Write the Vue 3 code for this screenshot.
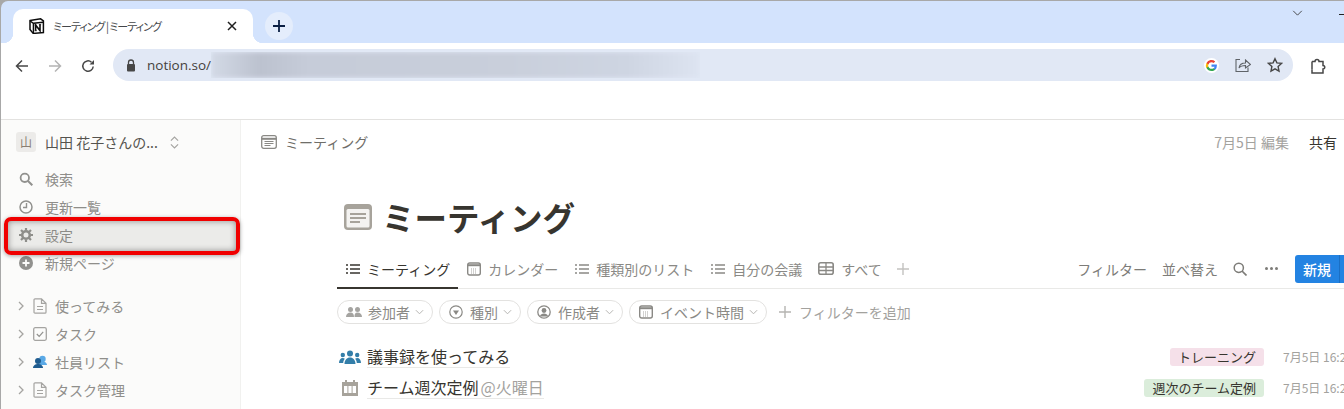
<template>
  <div class="page">
    <header class="tabstrip">
      <div class="tab">
        <svg class="favicon" viewBox="0 0 16 16" width="16" height="16"><path d="M1 2.600 11.600.8l2.800 2v11.800L4.200 15.400 1 11.500z" fill="#fff" stroke="#0c0c0c" stroke-width="1.500"/><path d="M1.200 3l3.200 2.400v9.600M4.400 5.200l9.800-1" fill="none" stroke="#0c0c0c" stroke-width="1.400"/><path d="M6.600 12.600V7.100l4.400 5.500V6.700" fill="none" stroke="#0c0c0c" stroke-width="1.600"/><path d="M5.700 7h1.800M9.900 6.700h2.200M5.700 12.700h2" stroke="#0c0c0c" stroke-width="1"/></svg>
        <span class="tabtitle">ミーティング | ミーティング</span>
        <svg class="tabclose" viewBox="0 0 10 10" width="10" height="10"><path d="M1 1l8 8M9 1l-8 8" stroke="#1f1f1f" stroke-width="1.500"/></svg>
      </div>
      <div class="newtab"><svg viewBox="0 0 12 12" width="12" height="12"><path d="M6 0v12M0 6h12" stroke="#0a1f44" stroke-width="1.800"/></svg></div>
      <svg class="winchev" viewBox="0 0 12 7" width="11" height="6"><path d="M1 1l5 5 5-5" fill="none" stroke="#333" stroke-width="1"/></svg>
      <span class="winmin"></span>
    </header>

    <div class="toolbar">
      <svg class="navicon first" viewBox="0 0 14 14" width="14" height="14"><path d="M13 7H2M7 1.500 1.500 7 7 12.500" fill="none" stroke="#474747" stroke-width="1.500"/></svg>
      <svg class="navicon" viewBox="0 0 14 14" width="14" height="14"><path d="M1 7h11M7 1.500 12.500 7 7 12.500" fill="none" stroke="#b4b4b4" stroke-width="1.500"/></svg>
      <svg class="navicon" viewBox="0 0 14 14" width="14" height="14"><path d="M12.200 7.500A5.200 5.200 0 1 1 10.500 3.200" fill="none" stroke="#474747" stroke-width="1.500"/><path d="M13 1v4.500H8.500z" fill="#474747"/></svg>
      <div class="omnibox">
        <svg class="lock" viewBox="0 0 10 13" width="10" height="13"><path d="M2.500 5V3.500a2.500 2.500 0 0 1 5 0V5" fill="none" stroke="#474747" stroke-width="1.300"/><rect x="1" y="5" width="8" height="7.500" rx="1" fill="#474747"/></svg>
        <span class="url">notion.so/</span>
        <div class="blurwrap"><div class="blur"></div></div>
        <span class="gbadge"><svg viewBox="0 0 14 14" width="13" height="13"><path d="M12.800 7.100c0-.5 0-.9-.1-1.300H7v2.500h3.300a2.800 2.800 0 0 1-1.200 1.800v1.500h2a6 6 0 0 0 1.700-4.500z" fill="#4285f4"/><path d="M7 13c1.600 0 3-.5 4-1.500L9 10a3.600 3.600 0 0 1-5.400-1.900H1.600v1.600A6 6 0 0 0 7 13z" fill="#34a853"/><path d="M3.600 8.100a3.600 3.600 0 0 1 0-2.300V4.300h-2a6 6 0 0 0 0 5.400z" fill="#fbbc05"/><path d="M7 3.400c.9 0 1.700.3 2.300.9L11 2.600A6 6 0 0 0 1.600 4.300l2 1.500A3.600 3.600 0 0 1 7 3.400z" fill="#ea4335"/></svg></span>
        <svg class="omniicon" viewBox="0 0 16 16" width="16" height="16"><path d="M5 2.500H1v12h12v-4" fill="none" stroke="#5f6368" stroke-width="1.100"/><path d="M4 11c.5-3.500 3-5 6.500-5V3l5 4.500-5 3.500V8.500C8 8.500 5.500 9 4 11z" fill="none" stroke="#5f6368" stroke-width="1.100"/></svg>
        <svg class="omniicon star" viewBox="0 0 16 16" width="16" height="16"><path d="M8 1.700l1.900 4.200 4.600.5-3.400 3.100.9 4.600L8 11.800l-4 2.300.9-4.600L1.500 6.400l4.600-.5z" fill="none" stroke="#474747" stroke-width="1.400"/></svg>
      </div>
      <svg class="puzzle" viewBox="0 0 16 16" width="16" height="16"><path d="M1 3.500h3a2 2 0 0 1 4 0h4v4a1.500 1.500 0 0 1 0 3.500v4H1v-3.500" fill="none" stroke="#474747" stroke-width="1.500"/><path d="M1 3.500v8" stroke="#474747" stroke-width="1.500"/></svg>
    </div>

    <div class="app">
      <aside class="sidebar">
        <div class="workspace">
          <span class="avatar">山</span>
          <span class="wsname">山田 花子さんの...</span>
          <svg viewBox="0 0 10 14" width="9" height="13"><path d="M1 5l4-4 4 4M1 9l4 4 4-4" fill="none" stroke="#a5a4a1" stroke-width="1.300"/></svg>
        </div>
        <nav class="nav">
          <div class="navitem">
            <svg viewBox="0 0 14 14" width="14" height="14"><circle cx="5.800" cy="5.800" r="4.200" fill="none" stroke="#91918e" stroke-width="1.800"/><path d="M9 9l4.300 4.300" stroke="#91918e" stroke-width="2"/></svg>
            <span>検索</span>
          </div>
          <div class="navitem">
            <svg viewBox="0 0 14 14" width="14" height="14"><circle cx="7" cy="7" r="6" fill="none" stroke="#91918e" stroke-width="1.500"/><path d="M7.500 3v4.500H4" fill="none" stroke="#91918e" stroke-width="1.400"/></svg>
            <span>更新一覧</span>
          </div>
          <div class="navitem">
            <svg viewBox="0 0 14 14" width="14" height="14"><circle cx="7" cy="7" r="3.800" fill="none" stroke="#91918e" stroke-width="2.600"/><path d="M7 0v2.500M7 11.500V14M0 7h2.500M11.500 7H14M2 2l2 2M10 10l2 2M12 2l-2 2M4 10l-2 2" stroke="#91918e" stroke-width="2.200"/></svg>
            <span>設定</span>
          </div>
          <div class="navitem">
            <svg viewBox="0 0 14 14" width="14" height="14"><circle cx="7" cy="7" r="7" fill="#91918e"/><path d="M7 3.500v7M3.500 7h7" stroke="#fbfbfa" stroke-width="1.800"/></svg>
            <span>新規ページ</span>
          </div>
        </nav>
        <div class="tree">
          <div class="treeitem" v-for="t in tree" :key="t.label">
            <svg class="chev" viewBox="0 0 6 10" width="6" height="10"><path d="M1 1l4 4-4 4" fill="none" stroke="#a5a4a1" stroke-width="1.300"/></svg>
            <svg v-if="t.icon === 'doc'" viewBox="0 0 14 16" width="14" height="16"><path d="M1 1.800a1 1 0 0 1 1-1h6.500L13 5.300v8.900a1 1 0 0 1-1 1H2a1 1 0 0 1-1-1zM8.500.8v4.500H13M4 8.500h6M4 11.500h6" fill="none" stroke="#a5a4a1" stroke-width="1.200"/></svg>
            <svg v-else-if="t.icon === 'check'" viewBox="0 0 14 14" width="14" height="14"><rect x=".7" y=".7" width="12.600" height="12.600" rx="1.500" fill="none" stroke="#a5a4a1" stroke-width="1.300"/><path d="M3.800 7l2.400 2.400 4-4.600" fill="none" stroke="#91918e" stroke-width="1.200"/></svg>
            <svg v-else viewBox="0 0 14 14" width="14" height="14"><circle cx="9.500" cy="4" r="3.200" fill="#5aa9e6"/><path d="M6 10c0-2.500 2-3.500 3.500-3.500S14 7.500 14 10z" fill="#5aa9e6"/><circle cx="5" cy="6" r="3" fill="#1f5c8f"/><path d="M0 13c0-2.500 2.500-4 5-4s5 1.500 5 4z" fill="#1f5c8f"/></svg>
            <span>{{ t.label }}</span>
          </div>
        </div>
      </aside>

      <main class="main">
        <div class="topbar">
          <svg viewBox="0 0 16 14" width="16" height="14"><rect x=".7" y=".7" width="14.600" height="12.600" rx="2" fill="none" stroke="#8a8985" stroke-width="1.300"/><path d="M.7 3.800h14.600" stroke="#8a8985" stroke-width="2"/><path d="M3.500 6.500h9M3.500 8.500h9M3.500 10.500h6" stroke="#8a8985" stroke-width="1"/></svg>
          <span class="crumb">ミーティング</span>
          <span class="edited">7月5日 編集</span>
          <span class="share">共有</span>
        </div>

        <div class="content">
          <div class="titlerow">
            <svg viewBox="0 0 28 26" width="28" height="26"><rect width="28" height="26" rx="4" fill="#a7a39b"/><rect x="2.500" y="5" width="23" height="18.500" rx="1.500" fill="#f4f3f1"/><path d="M6 10h16M6 14h16M6 18h10" stroke="#a7a39b" stroke-width="1.800"/></svg>
            <h1>ミーティング</h1>
          </div>

          <div class="tabsbar">
            <div class="viewtab active">
              <svg viewBox="0 0 14 10" width="14" height="10"><path d="M0 1h2M0 5h2M0 9h2M4 1h10M4 5h10M4 9h10" stroke="#37352f" stroke-width="1.400"/></svg>
              <span>ミーティング</span>
            </div>
            <div class="viewtab">
              <svg viewBox="0 0 14 14" width="14" height="14"><rect x=".7" y="1" width="12.600" height="12" rx="2" fill="none" stroke="#8a8985" stroke-width="1.400"/><path d="M1 3.200h12" stroke="#8a8985" stroke-width="2"/><path d="M4 7h6M4 9h6M4 11h6" stroke="#a5a4a1" stroke-width="1" stroke-dasharray="1 1"/></svg>
              <span>カレンダー</span>
            </div>
            <div class="viewtab">
              <svg viewBox="0 0 14 10" width="14" height="10"><path d="M0 1h2M0 5h2M0 9h2M4 1h10M4 5h10M4 9h10" stroke="#8a8985" stroke-width="1.400"/></svg>
              <span>種類別のリスト</span>
            </div>
            <div class="viewtab">
              <svg viewBox="0 0 14 10" width="14" height="10"><path d="M0 1h2M0 5h2M0 9h2M4 1h10M4 5h10M4 9h10" stroke="#8a8985" stroke-width="1.400"/></svg>
              <span>自分の会議</span>
            </div>
            <div class="viewtab tight">
              <svg viewBox="0 0 16 13" width="16" height="13"><rect x=".8" y=".8" width="14.400" height="11.400" rx="2" fill="none" stroke="#8a8985" stroke-width="1.600"/><path d="M1 5h14M8 1v11M1 8.500h14" stroke="#8a8985" stroke-width="1.300"/></svg>
              <span>すべて</span>
            </div>
            <svg class="addview" viewBox="0 0 12 12" width="12" height="12"><path d="M6 0v12M0 6h12" stroke="#c3c2c0" stroke-width="1.400"/></svg>
            <div class="actions">
              <span>フィルター</span>
              <span>並べ替え</span>
              <svg viewBox="0 0 14 14" width="14" height="14"><circle cx="5.800" cy="5.800" r="4.600" fill="none" stroke="#7d7c78" stroke-width="1.500"/><path d="M9 9l4.500 4.500" stroke="#7d7c78" stroke-width="1.700"/></svg>
              <svg class="dots" viewBox="0 0 13 3" width="13" height="3"><circle cx="1.500" cy="1.500" r="1.500" fill="#7d7c78"/><circle cx="6.500" cy="1.500" r="1.500" fill="#7d7c78"/><circle cx="11.500" cy="1.500" r="1.500" fill="#7d7c78"/></svg>
              <div class="newbtn"><span>新規</span></div>
            </div>
          </div>

          <div class="filters">
            <div class="pill">
              <svg class="people" viewBox="0 0 16 12" width="16" height="12"><circle cx="4.500" cy="3.500" r="2.500" fill="#a5a4a1"/><circle cx="11.500" cy="3.500" r="2.500" fill="#a5a4a1"/><path d="M0 11c0-3 2-4.500 4.500-4.500S8 8 8 11zM8.500 11c0-3 .5-4.500 3-4.500S16 8 16 11z" fill="#a5a4a1"/></svg>
              <span>参加者</span><svg class="pchev" viewBox="0 0 10 6" width="9" height="6"><path d="M1 1l4 4 4-4" fill="none" stroke="#b5b4b1" stroke-width="1.100"/></svg>
            </div>
            <div class="pill">
              <svg viewBox="0 0 14 14" width="14" height="14"><circle cx="7" cy="7" r="6.200" fill="none" stroke="#8a8985" stroke-width="1.200"/><path d="M4 5.500h6L7 10z" fill="#8a8985"/></svg>
              <span>種別</span><svg class="pchev" viewBox="0 0 10 6" width="9" height="6"><path d="M1 1l4 4 4-4" fill="none" stroke="#b5b4b1" stroke-width="1.100"/></svg>
            </div>
            <div class="pill">
              <svg viewBox="0 0 14 14" width="14" height="14"><circle cx="7" cy="7" r="6.200" fill="none" stroke="#8a8985" stroke-width="1.300"/><circle cx="7" cy="5.500" r="2.400" fill="#8a8985"/><path d="M2.800 11.500C3.500 9.300 5 8.500 7 8.500s3.500.8 4.200 3z" fill="#8a8985"/></svg>
              <span>作成者</span><svg class="pchev" viewBox="0 0 10 6" width="9" height="6"><path d="M1 1l4 4 4-4" fill="none" stroke="#b5b4b1" stroke-width="1.100"/></svg>
            </div>
            <div class="pill">
              <svg viewBox="0 0 14 14" width="14" height="14"><rect x=".7" y="1" width="12.600" height="12" rx="2" fill="none" stroke="#8a8985" stroke-width="1.400"/><path d="M1 3.200h12" stroke="#8a8985" stroke-width="2"/><path d="M4 7h6M4 9h6M4 11h6" stroke="#a5a4a1" stroke-width="1" stroke-dasharray="1 1"/></svg>
              <span>イベント時間</span><svg class="pchev" viewBox="0 0 10 6" width="9" height="6"><path d="M1 1l4 4 4-4" fill="none" stroke="#b5b4b1" stroke-width="1.100"/></svg>
            </div>
            <div class="addfilter">
              <svg viewBox="0 0 12 12" width="12" height="12"><path d="M6 0v12M0 6h12" stroke="#b5b4b1" stroke-width="1.400"/></svg>
              <span>フィルターを追加</span>
            </div>
          </div>

          <div class="rows">
            <div class="row">
              <svg class="rowicon" viewBox="0 0 22 14" width="22" height="14"><circle cx="11" cy="3.500" r="3" fill="#337ea9"/><circle cx="3.800" cy="5" r="2.200" fill="#337ea9"/><circle cx="18.200" cy="5" r="2.200" fill="#337ea9"/><path d="M5.500 14c0-4 2.500-6.500 5.500-6.500s5.500 2.500 5.500 6.500zM0 13c0-3 1.500-5 3.800-5 .9 0 1.500.3 2 .7-1 1.200-1.500 2.700-1.600 4.300zM22 13c0-3-1.500-5-3.800-5-.9 0-1.500.3-2 .7 1 1.200 1.500 2.700 1.600 4.300z" fill="#337ea9"/></svg>
              <span class="rowtitle">議事録を使ってみる</span>
              <span class="tag pink">トレーニング</span>
              <span class="date">7月5日 16:2</span>
            </div>
            <div class="row">
              <svg class="rowicon" viewBox="0 0 22 16" width="22" height="16"><path d="M3 2h16v14H3z" fill="#a7a39b"/><path d="M6 0h2v3H6zM14 0h2v3h-2z" fill="#a7a39b"/><path d="M5 6h3.400v7H5zM9.400 6h3.200v7H9.400zM13.600 6H17v7h-3.400z" fill="#fff"/></svg>
              <span class="rowtitle">チーム週次定例<em>@火曜日</em></span>
              <span class="tag green">週次のチーム定例</span>
              <span class="date">7月5日 16:2</span>
            </div>
          </div>
        </div>
      </main>
    </div>

    <div class="highlight"></div>
  </div>
</template>

<script setup>
const tree = [
  { label: '使ってみる', icon: 'doc' },
  { label: 'タスク', icon: 'check' },
  { label: '社員リスト', icon: 'people' },
  { label: 'タスク管理', icon: 'doc' }
]
</script>

<style>
html, body { margin: 0; background: #fff; overflow: hidden; }
</style>

<style scoped>
.page {
  position: relative;
  width: 1344px;
  height: 409px;
  overflow: hidden;
  font-family: "Noto Sans CJK JP", "Noto Sans", sans-serif;
  font-size: 14px;
  color: #37352f;
  box-sizing: border-box;
  background: #a8a8a8;
  padding: 1px 0 0 1px;
}
svg { flex: none; display: block; }

.tabstrip {
  height: 42px;
  background: #d3e3fd;
  display: flex;
  align-items: flex-end;
  padding-left: 12px;
  border-top-left-radius: 7px;
}
.tab {
  position: relative;
  width: 240px;
  height: 34px;
  background: #fff;
  border-radius: 10px 10px 0 0;
  display: flex;
  align-items: center;
  padding: 0 16px 0 16px;
  box-sizing: border-box;
}
.tab::before, .tab::after {
  content: "";
  position: absolute;
  bottom: 0;
  width: 10px;
  height: 10px;
}
.tab::before { left: -10px; background: radial-gradient(circle at 0 0, transparent 10px, #fff 10.500px); }
.tab::after { right: -10px; background: radial-gradient(circle at 100% 0, transparent 10px, #fff 10.500px); }
.tabtitle {
  margin-left: 8px;
  font-size: 11px;
  color: #45474a;
  font-feature-settings: "palt";
  letter-spacing: -1px;
  flex: 1;
  white-space: nowrap;
}
.newtab {
  width: 28px;
  height: 28px;
  margin: 0 0 3px 12px;
  border-radius: 50%;
  background: #e4edfc;
  display: flex;
  align-items: center;
  justify-content: center;
}
.winchev { margin: 0 0 27px auto; }
.winmin { width: 5px; height: 1px; background: #222; margin: 0 0 28px 36px; }

.toolbar {
  height: 77px;
  display: flex;
  align-items: flex-start;
  padding-top: 6px;
  box-sizing: border-box;
  border-bottom: 1px solid #e3e2e0;
  background: #fff;
}
.navicon { margin: 10px 0 0 19px; }
.navicon.first { margin-left: 14px; }
.omnibox {
  margin-left: 18px;
  width: 1180px;
  height: 32px;
  border-radius: 16px;
  background: #e1e8f5;
  display: flex;
  align-items: center;
  padding: 0 10px 0 13px;
  box-sizing: border-box;
  overflow: hidden;
}
.url { margin-left: 11px; font-family: "Open Sans", sans-serif; font-size: 13.500px; color: #45413c; width: 64px; white-space: nowrap; }
.blurwrap { width: 489px; height: 26px; overflow: hidden; }
.blur {
  height: 100%;
  background: linear-gradient(90deg, #d3dae6 0, #bcc2cf 10%, #c6ccd9 20%, #c9cfdb 60%, #ced5e2 85%, #dde4f1 100%);
  filter: blur(2px);
}
.gbadge {
  margin-left: auto;
  width: 15px;
  height: 15px;
  border-radius: 50%;
  background: #fff;
  display: flex;
  align-items: center;
  justify-content: center;
}
.omniicon { margin-left: 16px; }
.omniicon.star { margin-left: 16px; }
.puzzle { margin: 9px 0 0 18px; }

.app { display: flex; height: 289px; background: #fff; }
.sidebar {
  width: 239px;
  height: 100%;
  flex: none;
  background: #fbfbfa;
  border-right: 1px solid #f1f1ef;
  color: #8f8e8a;
  overflow: hidden;
}
.workspace {
  display: flex;
  align-items: center;
  height: 20px;
  margin-top: 12px;
  padding-left: 15px;
}
.avatar {
  width: 20px;
  height: 20px;
  border-radius: 3px;
  background: #ecebe9;
  color: #8a7f73;
  font-size: 12px;
  line-height: 20px;
  text-align: center;
}
.wsname { margin: 0 12px 0 9px; font-size: 14px; color: #55534e; white-space: nowrap; }
.nav { margin-top: 13px; }
.navitem, .treeitem { height: 28px; display: flex; align-items: center; white-space: nowrap; }
.navitem { padding-left: 18px; gap: 12px; }
.tree { margin-top: 15px; }
.treeitem { padding-left: 17px; }
.treeitem .chev { margin-right: 9px; }
.treeitem span { margin-left: 8px; }

.main { flex: 1; min-width: 0; }
.topbar {
  height: 20px;
  margin-top: 12px;
  display: flex;
  align-items: center;
  padding: 0 7px 0 20px;
  color: #6f6e69;
}
.crumb { margin-left: 8px; }
.edited { margin-left: auto; color: #a3a29e; font-size: 14px; }
.share { margin-left: 20px; color: #37352f; font-size: 14px; }

.content { padding-left: 96px; }
.titlerow { display: flex; align-items: center; margin: 45px 0 0 7px; height: 40px; }
h1 { margin: 0 0 0 10px; font-size: 32.500px; font-weight: 700; line-height: 40px; color: #37352f; white-space: nowrap; }

.tabsbar {
  display: flex;
  align-items: center;
  height: 40px;
  margin-top: 12px;
  border-bottom: 1px solid #e9e9e7;
  box-sizing: border-box;
}
.viewtab {
  position: relative;
  height: 100%;
  display: flex;
  align-items: center;
  gap: 7px;
  padding: 0 8px;
  color: #8a8985;
  white-space: nowrap;
  margin-right: 1px;
}
.viewtab.active { color: #37352f; padding: 0 8px 0 9px; gap: 7px; }
.viewtab.tight { margin-left: -1px; }
.viewtab.active::after {
  content: "";
  position: absolute;
  left: 0;
  right: 0;
  bottom: -1px;
  height: 2px;
  background: #37352f;
}
.addview { margin-left: 6px; }
.actions { margin-left: auto; display: flex; align-items: center; color: #7d7c78; gap: 15px; height: 100%; }
.dots { margin-left: 3px; }
.newbtn {
  position: relative;
  width: 49px;
  height: 28px;
  margin-left: 2px;
  background: #2383e2;
  border-radius: 3px 0 0 3px;
  color: #fff;
  display: flex;
  align-items: center;
  padding-left: 8px;
  box-sizing: border-box;
  font-weight: 500;
}
.newbtn::after {
  content: "";
  position: absolute;
  left: 44px;
  top: 0;
  bottom: 0;
  width: 1px;
  background: #1b6fc4;
}

.filters { display: flex; align-items: center; gap: 6px; margin-top: 11px; height: 24px; }
.pill {
  height: 24px;
  box-sizing: border-box;
  border: 1px solid #e3e2e0;
  border-radius: 12px;
  display: flex;
  align-items: center;
  padding: 0 8px 0 9px;
  gap: 7px;
  color: #8a8985;
  white-space: nowrap;
}
.pill .people { margin: 0 -1px; }
.pchev { margin-left: -2px; }
.addfilter { margin-left: 6px; display: flex; align-items: center; gap: 8px; color: #a3a29e; white-space: nowrap; }

.rows { margin-top: 17px; }
.row { height: 31px; display: flex; align-items: center; overflow: hidden; }
.rowicon { margin: 0 6px 0 2px; }
.rowtitle {
  font-size: 16px;
  color: #37352f;
  border-bottom: 1px solid #e9e9e7;
  line-height: 21px;
  white-space: nowrap;
}
.rowtitle em { font-style: normal; color: #a3a29e; margin-left: 2px; }
.tag {
  margin-left: auto;
  height: 18px;
  line-height: 18px;
  padding: 0 8px;
  border-radius: 3px;
  font-size: 13px;
  white-space: nowrap;
}
.pink { background: #f5e0e9; }
.green { background: #dbeddb; }
.date { width: 61px; margin-left: 19px; font-size: 12px; color: #a3a29e; white-space: nowrap; overflow: hidden; flex: none; }

.highlight {
  position: absolute;
  left: 4px;
  top: 217px;
  width: 236px;
  height: 38px;
  box-sizing: border-box;
  border: 4px solid #f00000;
  border-radius: 7px;
  background: rgba(120, 120, 115, 0.12);
  box-shadow: inset 0 0 6px rgba(0,0,0,.4), 0 1px 4px rgba(0,0,0,.35);
}
</style>
